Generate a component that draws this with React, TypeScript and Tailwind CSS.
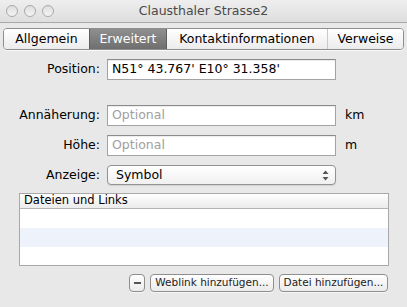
import { useState } from 'react';

const tabs = ['Allgemein', 'Erweitert', 'Kontaktinformationen', 'Verweise'];
const tabWidths = ['w-[85px]', 'w-[78px]', 'w-[160px]', 'w-[78px]'];

const font = "font-['DejaVu_Sans','Liberation_Sans',sans-serif]";

const TextField = ({ value, placeholder }: { value?: string; placeholder?: string }) => (
  <div className="h-[21px] w-[229px] bg-white border border-[#a3a3a3] border-t-[#8a8a8a] flex items-center px-[4px] shadow-[inset_0_1px_1px_rgba(0,0,0,0.08)]">
    {value ? (
      <span className="text-[12.5px] text-black">{value}</span>
    ) : (
      <span className="text-[12.5px] text-[#a0a0a0]">{placeholder}</span>
    )}
  </div>
);

const SmallButton = ({ children, className = '' }: { children: React.ReactNode; className?: string }) => (
  <button
    className={`h-[18px] rounded-[4px] border border-[#8f8f8f] bg-gradient-to-b from-white to-[#ebebeb] text-[10.5px] text-[#222] whitespace-nowrap flex items-center justify-center shadow-[0_1px_0_rgba(255,255,255,0.6)] ${className}`}
  >
    {children}
  </button>
);

const App: React.FC = () => {
  const [active, setActive] = useState(1);

  return (
    <div className={`w-[407px] h-[307px] bg-[#e8e8e8] flex flex-col ${font} overflow-hidden`}>
      {/* title bar */}
      <div className="h-[23px] shrink-0 bg-gradient-to-b from-[#eeeeee] to-[#dedede] border-b border-[#a9a9a9] flex items-center relative">
        <div className="flex gap-[6px] pl-[6px]">
          {[0, 1, 2].map(i => (
            <span
              key={i}
              className="w-[12px] h-[12px] rounded-full border border-[#a9a9a9] bg-gradient-to-b from-[#dedede] to-[#f4f4f4]"
            />
          ))}
        </div>
        <div className="absolute inset-0 flex items-center justify-center text-[12.5px] text-[#4a4a4a]">
          Clausthaler Strasse2
        </div>
      </div>

      {/* segmented tabs */}
      <div className="mt-[5px] mx-[3px] flex h-[22px] rounded-[4px] border border-[#8e8e8e] overflow-hidden shadow-[0_1px_0_rgba(255,255,255,0.7)]">
        {tabs.map((tab, i) => (
          <button
            key={tab}
            onClick={() => setActive(i)}
            className={`${tabWidths[i]} ${i === tabs.length - 1 ? 'flex-1' : ''} flex items-center justify-center text-[12.5px] ${
              i === active
                ? 'bg-gradient-to-b from-[#8f8f8f] to-[#6f6f6f] text-white border-x border-[#5e5e5e]'
                : 'bg-gradient-to-b from-white to-[#ececec] text-black'
            } ${i === 3 ? 'border-l border-[#c9c9c9]' : ''}`}
          >
            {tab}
          </button>
        ))}
      </div>

      {/* form */}
      <div className="mt-[9px] grid grid-cols-[100px_229px_auto] gap-x-[7px] text-[12.5px] text-black">
        <span className="self-center text-right">Position:</span>
        <TextField value="N51° 43.767' E10° 31.358'" />
        <span />

        <span className="col-span-3 h-[25px]" />

        <span className="self-center text-right">Annäherung:</span>
        <TextField placeholder="Optional" />
        <span className="self-center pl-[2px]">km</span>

        <span className="col-span-3 h-[9px]" />

        <span className="self-center text-right">Höhe:</span>
        <TextField placeholder="Optional" />
        <span className="self-center pl-[2px]">m</span>

        <span className="col-span-3 h-[9px]" />

        <span className="self-center text-right">Anzeige:</span>
        <div className="h-[20px] rounded-[4px] border border-[#929292] bg-gradient-to-b from-white to-[#f0f0f0] flex items-center justify-between pl-[8px] pr-[6px] shadow-[0_1px_1px_rgba(0,0,0,0.1)]">
          <span>Symbol</span>
          <svg width="7" height="11" viewBox="0 0 7 11">
            <path d="M3.5 0.5 L6.5 4 L0.5 4 Z" fill="#555" />
            <path d="M3.5 10.5 L6.5 7 L0.5 7 Z" fill="#555" />
          </svg>
        </div>
        <span />
      </div>

      {/* table */}
      <div className="mt-[8px] ml-[19px] w-[370px] border border-[#a8a8a8] bg-white">
        <div className="h-[15px] bg-gradient-to-b from-white to-[#ebebeb] border-b border-[#b4b4b4] flex items-center pl-[4px] text-[11.5px] text-black">
          Dateien und Links
        </div>
        <div className="h-[19px] bg-white" />
        <div className="h-[19px] bg-[#eef3fb]" />
        <div className="h-[18px] bg-white" />
      </div>

      {/* buttons */}
      <div className="mt-[8px] flex justify-end gap-[5px] pr-[19px]">
        <SmallButton className="w-[16px]">
          <span className="block w-[7px] h-[1.5px] bg-[#555]" />
        </SmallButton>
        <SmallButton className="w-[124px]">Weblink hinzufügen...</SmallButton>
        <SmallButton className="w-[109px]">Datei hinzufügen...</SmallButton>
      </div>
    </div>
  );
};

export default App;
